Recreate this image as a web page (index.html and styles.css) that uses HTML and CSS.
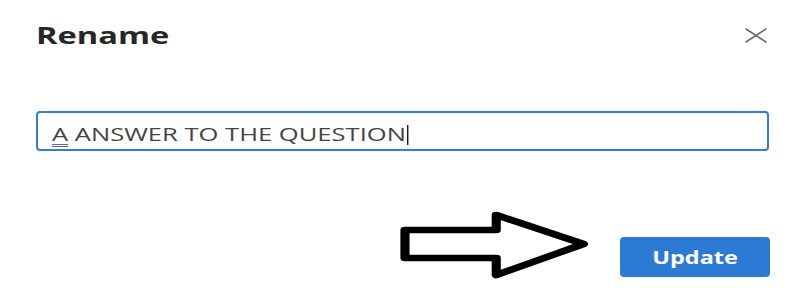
FILE: index.html
```html
<!DOCTYPE html>
<html lang="en">
<head>
<meta charset="utf-8">
<title>Rename</title>
<link rel="stylesheet" href="styles.css">
</head>
<body>
<div class="dialog">
  <div class="header">
    <h1 class="title"><span class="wide">Rename</span></h1>
    <button class="close" aria-label="Close">
      <svg width="22" height="15" viewBox="0 0 22 15"><path d="M1 1 L21 14 M21 1 L1 14" stroke="#6b6b6b" stroke-width="1.6" fill="none" stroke-linecap="round"/></svg>
    </button>
  </div>
  <div class="field">
    <span class="wide value"><span class="ime">A</span> ANSWER TO THE QUESTION<span class="caret"></span></span>
  </div>
  <div class="footer">
    <button class="primary"><span class="wide-c">Update</span></button>
  </div>
  <svg class="arrow" width="205" height="80" viewBox="0 0 146 80" preserveAspectRatio="none">
    <polygon points="7.1,25 72.1,25 72.1,10 134.3,39 72.1,70 72.1,53 7.1,53" fill="#fff" stroke="#000" stroke-width="6.5" stroke-linejoin="round"/>
  </svg>
</div>
</body>
</html>
```
FILE: styles.css
```css
html, body {
  margin: 0;
  padding: 0;
  background: #ffffff;
}
.dialog {
  position: relative;
  box-sizing: border-box;
  width: 800px;
  height: 302px;
  padding: 18px 30px 0 36px;
  font-family: "Open Sans", "Noto Sans", sans-serif;
}
.header {
  display: flex;
  justify-content: space-between;
  align-items: flex-start;
}
.title {
  margin: 0;
  font-size: 24px;
  line-height: 33px;
  font-weight: 700;
  color: #262626;
}
.wide {
  display: inline-block;
  transform: scaleX(1.36);
  transform-origin: left center;
}
.wide-c {
  display: inline-block;
  transform: scaleX(1.38);
  transform-origin: center center;
}
.close {
  margin: 10px 3px 0 0;
  padding: 0;
  border: 0;
  background: none;
  width: 22px;
  height: 15px;
  display: block;
}
.close svg { display: block; }
.field {
  margin-top: 60px;
  box-sizing: border-box;
  height: 40px;
  border: 2px solid #2f7fd8;
  border-radius: 4px;
  display: flex;
  align-items: center;
  padding: 6px 14px 0 14px;
  font-size: 18px;
  color: #444444;
  margin-right: 1px;
}
.value {
  transform: scaleX(1.42);
  white-space: nowrap;
}
.ime {
  text-decoration: underline double #5b5bd6;
  text-decoration-thickness: 1px;
  text-underline-offset: 3px;
}
.caret {
  display: inline-block;
  width: 1.2px;
  height: 20px;
  margin-left: 1px;
  background: #1a1a1a;
  vertical-align: -4px;
}
.footer {
  margin-top: 86px;
  display: flex;
  justify-content: flex-end;
}
.primary {
  width: 150px;
  height: 40px;
  border: 0;
  border-radius: 4px;
  background: #2b7bd5;
  color: #ffffff;
  font-family: "Open Sans", "Noto Sans", sans-serif;
  font-weight: 700;
  font-size: 17px;
  padding: 0;
}
.arrow {
  position: absolute;
  left: 395px;
  top: 205px;
  display: block;
}
```
